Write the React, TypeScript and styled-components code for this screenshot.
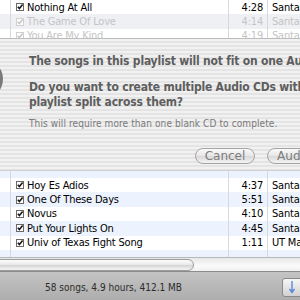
import React, { FC } from 'react';
import styled, { createGlobalStyle } from 'styled-components';

interface ITrack {
  name: string;
  time: string;
  artist: string;
}

const topTracks: ITrack[] = [
  { name: 'Nothing At All', time: '4:28', artist: 'Santana' },
  { name: 'The Game Of Love', time: '4:14', artist: 'Santana' },
  { name: 'You Are My Kind', time: '4:19', artist: 'Santana' },
];

const bottomTracks: ITrack[] = [
  { name: 'Hoy Es Adios', time: '4:37', artist: 'Santana' },
  { name: 'One Of These Days', time: '5:51', artist: 'Santana' },
  { name: 'Novus', time: '4:10', artist: 'Santana' },
  { name: 'Put Your Lights On', time: '4:45', artist: 'Santana' },
  { name: 'Univ of Texas Fight Song', time: '1:11', artist: 'UT Marching Band' },
];

const CheckBox: FC<{ faded?: boolean }> = ({ faded }) => (
  <svg width="8" height="8" viewBox="0 0 8 8">
    <rect x="0.5" y="0.5" width="7" height="7" fill="#fff" stroke={faded ? '#d0d0d0' : '#6a6a6a'} />
    <path d="M1.8 3.8 L3.4 5.6 L6.6 1.6" fill="none" stroke={faded ? '#c8c8c8' : '#1a1a1a'} strokeWidth="1.6" />
  </svg>
);

const TrackRow: FC<{ track?: ITrack; striped?: boolean; faded?: boolean; height?: number }> = ({
  track,
  striped,
  faded,
  height,
}) => (
  <Row $striped={striped} $faded={faded} $height={height}>
    <Cell />
    <NameCell>
      {track && <CheckBox faded={faded} />}
      {track && <span>{track.name}</span>}
    </NameCell>
    <TimeCell>{track?.time}</TimeCell>
    <ArtistCell>{track?.artist}</ArtistCell>
  </Row>
);

const App: FC = () => (
  <>
    <GlobalStyle />
    <Window>
      <TrackList>
        <TopRows>
          <TrackRow track={topTracks[0]} />
          <TrackRow track={topTracks[1]} striped faded />
          <TrackRow track={topTracks[2]} faded />
        </TopRows>
        <Sheet>
          <AppIcon>
            <svg width="40" height="40" viewBox="0 0 40 40">
              <circle cx="20" cy="20" r="20" fill="#7a7a7a" />
              <circle cx="20" cy="20" r="16" fill="#bdbdbd" />
            </svg>
          </AppIcon>
          <SheetBody>
            <Heading $gap={11}>The songs in this playlist will not fit on one Audio CD.</Heading>
            <Heading $gap={7}>
              Do you want to create multiple Audio CDs with
              <br />
              playlist split across them?
            </Heading>
            <Note>This will require more than one blank CD to complete.</Note>
            <Buttons>
              <PillButton $width={58}>Cancel</PillButton>
              <PillButton $width={80}>Audio CDs</PillButton>
            </Buttons>
          </SheetBody>
        </Sheet>
        <BottomRows>
          <TrackRow striped height={7} />
          {bottomTracks.map((track, i) => (
            <TrackRow key={track.name} track={track} striped={i % 2 === 1} />
          ))}
          <TrackRow striped height={8} />
        </BottomRows>
      </TrackList>
      <ScrollBar>
        <ScrollThumb />
      </ScrollBar>
      <StatusBar>
        <span>58 songs, 4.9 hours, 412.1 MB</span>
        <StatusButton>
          <svg width="8" height="14" viewBox="0 0 8 14">
            <path d="M4 1 V12 M1.5 9 L4 12.5 L6.5 9" fill="none" stroke="#5a8ad6" strokeWidth="1.4" />
          </svg>
        </StatusButton>
      </StatusBar>
    </Window>
  </>
);

export default App;

const GlobalStyle = createGlobalStyle`
  html, body {
    margin: 0;
    padding: 0;
    background: #fff;
  }

  body {
    font-family: "DejaVu Sans Condensed", "DejaVu Sans", "Liberation Sans", sans-serif;
    font-stretch: condensed;
  }
`;

const Window = styled.div`
  width: 300px;
  height: 300px;
  display: flex;
  flex-direction: column;
  overflow: hidden;
  background: #fff;
`;

const TrackList = styled.div`
  display: flex;
  flex-direction: column;
  height: 257px;
  overflow: hidden;
`;

const TopRows = styled.div`
  height: 38px;
  overflow: hidden;
  flex-shrink: 0;
`;

const BottomRows = styled.div`
  flex: 1;
  overflow: hidden;
`;

const Row = styled.div<{ $striped?: boolean; $faded?: boolean; $height?: number }>`
  display: grid;
  grid-template-columns: 11px 218px 39px 1fr;
  height: ${({ $height }) => $height ?? 14.4}px;
  font-size: 11px;
  letter-spacing: -0.2px;
  white-space: nowrap;
  color: ${({ $faded }) => ($faded ? '#c4c4c4' : '#000')};
  background: ${({ $striped, $faded }) => ($striped ? ($faded ? '#eef0f3' : '#edf3fe') : '#fff')};
`;

const Cell = styled.div`
  display: flex;
  align-items: center;
  overflow: hidden;
  border-right: 1px solid #d9d9d9;
`;

const NameCell = styled(Cell)`
  gap: 3px;
  padding-left: 5px;
`;

const TimeCell = styled(Cell)`
  justify-content: flex-end;
  padding-right: 4px;
`;

const ArtistCell = styled(Cell)`
  border-right: none;
  padding-left: 4px;
`;

const Sheet = styled.div`
  height: 131px;
  flex-shrink: 0;
  display: flex;
  border-top: 1px solid #bcbcbc;
  border-bottom: 1px solid #cfcfcf;
  background: repeating-linear-gradient(#f1f1f1 0 2px, #e4e4e4 2px 4px);
`;

const AppIcon = styled.div`
  width: 40px;
  margin-left: -37px;
  padding-top: 20px;
  flex-shrink: 0;
`;

const SheetBody = styled.div`
  padding: 15px 0 0 26px;
  display: flex;
  flex-direction: column;
  white-space: nowrap;
`;

const Heading = styled.div<{ $gap: number }>`
  font-weight: bold;
  font-size: 12px;
  letter-spacing: -0.2px;
  line-height: 15px;
  color: #5e5e5e;
  margin-bottom: ${({ $gap }) => $gap}px;
`;

const Note = styled.div`
  font-size: 10px;
  letter-spacing: 0.1px;
  line-height: 14px;
  color: #7a7a7a;
`;

const Buttons = styled.div`
  display: flex;
  gap: 12px;
  margin: 17px 0 0 166px;
`;

const PillButton = styled.div<{ $width: number }>`
  width: ${({ $width }) => $width}px;
  height: 14px;
  flex-shrink: 0;
  display: flex;
  align-items: center;
  justify-content: center;
  border: 1px solid #a4a4a4;
  border-radius: 9px;
  font-family: "DejaVu Sans", sans-serif;
  font-stretch: normal;
  font-size: 12px;
  color: #7c7c7c;
  background: linear-gradient(#fafafa, #e6e6e6 50%, #d8d8d8 51%, #f4f4f4);
`;

const ScrollBar = styled.div`
  height: 13px;
  flex-shrink: 0;
  border-top: 1px solid #b8b8b8;
  background: linear-gradient(#e8e8e8, #fafafa 60%, #f0f0f0);
`;

const ScrollThumb = styled.div`
  width: 200px;
  height: 10px;
  margin: 1px 0 0 -8px;
  border: 1px solid #9c9c9c;
  border-radius: 6px;
  background: linear-gradient(#fdfdfd, #e8e8e8 50%, #d6d6d6 55%, #f5f5f5);
`;

const StatusBar = styled.div`
  flex: 1;
  display: flex;
  align-items: center;
  justify-content: space-between;
  padding: 2px 0 0 45px;
  border-top: 1px solid #8c8c8c;
  background: linear-gradient(#c4c4c4, #adadad);
  font-size: 10px;
  color: #2c2c2c;
  white-space: nowrap;
`;

const StatusButton = styled.div`
  width: 22px;
  height: 17px;
  margin-right: -11px;
  flex-shrink: 0;
  display: flex;
  align-items: center;
  padding-left: 5px;
  border: 1px solid #8a8a8a;
  border-radius: 3px;
  background: linear-gradient(#f6f6f6, #d2d2d2);
`;
